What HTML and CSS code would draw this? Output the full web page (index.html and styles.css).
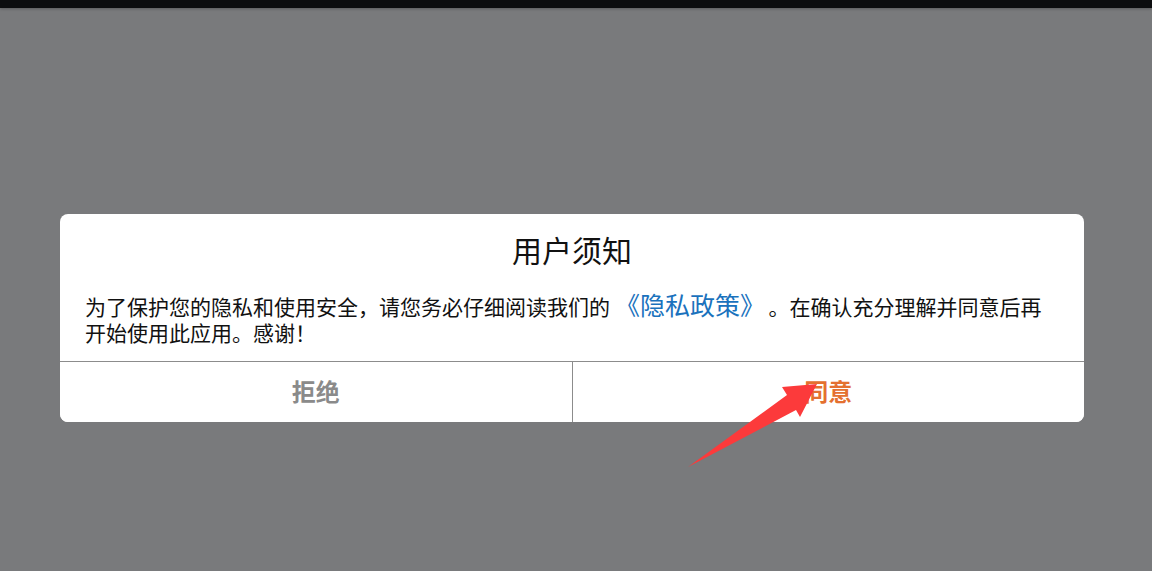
FILE: index.html
```html
<!DOCTYPE html>
<html lang="zh-CN">
<head>
    <meta charset="UTF-8">
    <meta name="viewport" content="width=device-width, initial-scale=1.0">
    <title>用户须知</title>
    <link rel="stylesheet" href="styles.css">
</head>
<body>

    <div class="top-bar"></div>

    <div class="overlay">
        <div class="dialog">
            <h1 class="dialog-title">用户须知</h1>
            <p class="dialog-text">为了保护您的隐私和使用安全，请您务必仔细阅读我们的<a class="policy-link" href="#">《隐私政策》</a>。在确认充分理解并同意后再开始使用此应用。感谢！</p>
            <div class="dialog-buttons">
                <button class="btn btn-reject">拒绝</button>
                <button class="btn btn-agree">同意</button>
            </div>
        </div>
    </div>

    <!-- annotation arrow pointing at the agree button -->
    <svg class="arrow" width="1152" height="571" viewBox="0 0 1152 571">
        <polygon points="817,384 782,387 787,395 688,467 796,410 800,417" fill="#fc3a3b"/>
    </svg>

</body>
</html>
```

FILE: styles.css
```css
body {
    margin: 0;
    padding: 0;
    height: 571px;
    overflow: hidden;
    background-color: #797a7c;
    font-family: "Noto Sans CJK SC", "Noto Sans", sans-serif;
    color: #111;
}

.top-bar {
    height: 8px;
    background-color: #0c0d0f;
    box-shadow: 0 1px 3px rgba(0, 0, 0, 0.25);
}

.overlay {
    display: flex;
    padding: 206px 0 0 60px;
}

.dialog {
    width: 1024px;
    background-color: #fff;
    border-radius: 8px;
    overflow: hidden;
}

.dialog-title {
    margin: 15px 0 0;
    font-size: 30px;
    font-weight: 400;
    line-height: 40px;
    text-align: center;
    color: #111;
}

.dialog-text {
    margin: 24px 0 0;
    padding: 0 36px 16px 25px;
    font-size: 21px;
    line-height: 26px;
    color: #111;
}

.policy-link {
    padding: 0 16px 0 5px;
    font-size: 25px;
    line-height: 0;
    color: #1a72bd;
    text-decoration: none;
}

.dialog-buttons {
    display: flex;
    border-top: 1px solid #8c8c8c;
}

.btn {
    flex: 1;
    height: 60px;
    padding: 0 0 4px;
    border: none;
    background: #fff;
    font-family: inherit;
    font-size: 24px;
    font-weight: 700;
    cursor: pointer;
}

.btn-reject {
    color: #8a8a8a;
}

.btn-agree {
    border-left: 1px solid #8c8c8c;
    color: #e4702f;
}

.arrow {
    position: absolute;
    left: 0;
    top: 0;
    pointer-events: none;
}
```
